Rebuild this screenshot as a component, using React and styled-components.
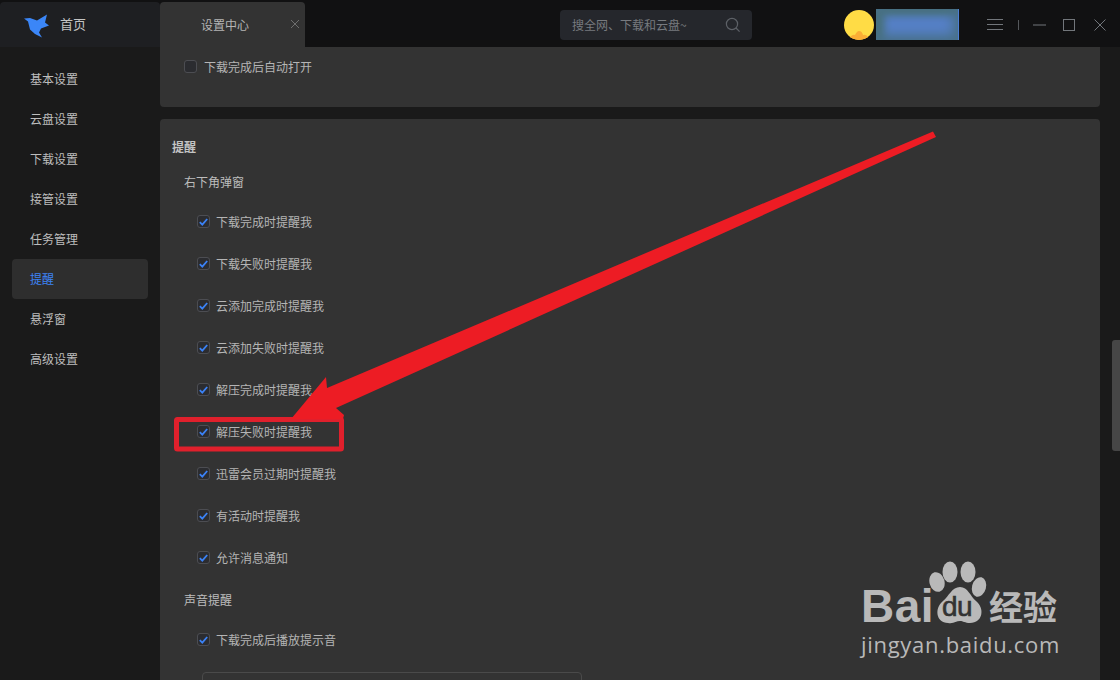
import React from "react";
import styled, { createGlobalStyle } from "styled-components";

const Global = createGlobalStyle`
  html, body { margin: 0; padding: 0; background: #1a1a1a; overflow: hidden; }
  * { box-sizing: border-box; }
  body { font-family: "Noto Sans CJK SC", "Noto Sans", sans-serif; font-size: 12px; color: #bdbdbd; }
`;

const Page = styled.div`
  position: relative; width: 1120px; height: 680px; overflow: hidden;
  display: flex; flex-direction: column; background: #1a1a1a;
`;
const TopBar = styled.header`
  height: 47px; flex: none; background: #111112; display: flex; align-items: flex-end;
`;
const HomeTab = styled.div`
  width: 160px; height: 45px; background: #1e1f22; border-radius: 4px 4px 0 0;
  display: flex; align-items: center; padding: 0 0 2px 24px; gap: 10px;
  font-size: 13px; color: #c4c4c4;
  svg { margin-top: 4px; }
`;
const SettingsTab = styled.div`
  width: 145px; height: 45px; background: #333333; border-radius: 4px 4px 0 0;
  display: flex; align-items: center; justify-content: space-between;
  padding: 0 5px 1px 41px; font-size: 12px; color: #b5b5b5;
  svg { margin-top: -1px; }
`;
const Search = styled.div`
  width: 192px; height: 30px; margin: 0 0 7px 255px; background: #25272c; border-radius: 4px;
  display: flex; align-items: center; justify-content: space-between;
  padding: 0 11px 2px 12px; color: #777a7f; font-size: 12px;
  svg { margin-top: 2px; }
`;
const UserArea = styled.div`
  display: flex; align-items: center; margin: 0 0 7px 92px; height: 30px; gap: 2px;
`;
const Avatar = styled.div`
  position: relative; overflow: hidden; width: 30px; height: 30px; border-radius: 50%; background: #ffdc45;
`;
const Name = styled.div`
  width: 83px; height: 31px; margin-top: -2px;
  background: #5680c8;
  box-shadow: inset 0 0 12px 5px #48708a, inset 0 7px 7px -3px #46705a, inset 10px 0 9px -4px #46705a;
  border-right: 1px solid #4c7fd6;
`;
const WinIcons = styled.div`
  display: flex; align-items: center; margin: 0 0 7px 28px; height: 30px; color: #72767b;
`;
const Sep = styled.i`
  display: block; width: 1px; height: 10px; background: #55585c; margin: 0 14px 0 15px;
`;
const WinBtn = styled.svg`
  display: block; margin-right: ${p => p.$gap}px;
`;
const Body = styled.div`
  flex: 1; min-height: 0; display: flex;
`;
const Sidebar = styled.nav`
  width: 160px; flex: none; padding: 12px 12px 0; display: flex; flex-direction: column;
`;
const NavItem = styled.div`
  height: 40px; border-radius: 4px; padding: 0 0 2px 18px; display: flex; align-items: center;
  font-size: 12px;
  color: ${p => (p.$active ? "#3d83f5" : "#bdbdbd")};
  background: ${p => (p.$active ? "#2e2e2e" : "transparent")};
`;
const Content = styled.main`
  width: 940px; flex: none; display: flex; flex-direction: column; gap: 12px;
`;
const TopCard = styled.section`
  height: 60px; flex: none; background: #333333; border-radius: 0 0 4px 4px; padding: 11px 0 0 24px;
`;
const Card = styled.section`
  flex: 1; background: #333333; border-radius: 4px 4px 0 0; padding: 18px 0 0 12px;
`;
const SectionTitle = styled.h2`
  margin: 1px 0 0; height: 18px; line-height: 18px; font-size: 12px; font-weight: 700; color: #c4c4c4;
`;
const SubTitle = styled.h3`
  margin: ${p => p.$top}px 0 10px 12px; height: 18px; line-height: 18px;
  font-size: 12px; font-weight: 400; color: #bdbdbd;
`;
const Row = styled.label`
  height: ${p => p.$h || 42}px; display: flex; align-items: center; gap: ${p => p.$gap ?? 6}px;
  padding-left: ${p => p.$pad ?? 25}px; padding-bottom: 2px; color: #b5b5b5; font-size: 12px;
`;
const Box = styled.span`
  width: 13px; height: 13px; flex: none; border-radius: 3px; border: 1px solid #4c4d52;
  background: #2b2c30; display: flex; align-items: center; justify-content: center;
  margin-top: 1px;
`;
const SelectBox = styled.div`
  width: 380px; height: 40px; margin: 11px 0 0 30px; border: 1px solid #4a4a4a; border-radius: 4px;
`;
const Gutter = styled.div`
  position: relative; flex: 1; background: #1a1a1a;
`;
const Thumb = styled.div`
  position: absolute; left: 12px; top: 293px; width: 8px; height: 111px;
  background: #464646; border-radius: 3px 0 0 3px;
`;
const Annotation = styled.svg`
  position: absolute; inset: 0; pointer-events: none;
`;
const Watermark = styled.div`
  position: absolute; left: 858px; top: 556px; width: 210px; height: 104px; color: #b9b9b9;
  font-family: "Liberation Sans", sans-serif;
`;
const Paw = styled.svg`
  position: absolute; left: 70px; top: 4px;
`;
const Bai = styled.span`
  position: absolute; left: 3px; top: 27px; font-size: 46px; line-height: 46px; font-weight: 700; letter-spacing: 0.5px;
`;
const Du = styled.span`
  position: absolute; left: 84px; top: 37px; font-size: 28px; line-height: 28px; font-weight: 400; color: #333; letter-spacing: -0.5px;
  -webkit-text-stroke: 0.6px #333;
`;
const Jing = styled.span`
  position: absolute; left: 131px; top: 31px; font-family: "Noto Sans CJK SC", sans-serif;
  font-size: 34px; line-height: 38px; font-weight: 700;
`;
const Url = styled.span`
  position: absolute; left: 3px; top: 74px; font-family: "Open Sans", sans-serif; font-size: 22px; line-height: 28px; letter-spacing: 0.7px;
`;

const Check = ({ on }) => (
  <Box>
    {on && (
      <svg width="9" height="8" viewBox="0 0 9 8">
        <path d="M0.8 4.2 L3.3 6.6 L8.2 1" fill="none" stroke="#3b82f6" strokeWidth="1.8" />
      </svg>
    )}
  </Box>
);

const nav = ["基本设置", "云盘设置", "下载设置", "接管设置", "任务管理", "提醒", "悬浮窗", "高级设置"];
const popup = [
  "下载完成时提醒我", "下载失败时提醒我", "云添加完成时提醒我", "云添加失败时提醒我",
  "解压完成时提醒我", "解压失败时提醒我", "迅雷会员过期时提醒我", "有活动时提醒我", "允许消息通知",
];

export default function App() {
  return (
    <Page>
      <Global />
      <TopBar>
        <HomeTab>
          <svg width="26" height="24" viewBox="24 14.5 26 24">
            <path d="M24 19 L30 18.5 L37 21 L47 15 L45 23 L49 26 L41 29 L39 33 L42 38 L35 34.5 L30 30 L28 22 Z" fill="#3b86f7" />
          </svg>
          首页
        </HomeTab>
        <SettingsTab>
          设置中心
          <svg width="10" height="10" viewBox="0 0 10 10">
            <path d="M1 1 L9 9 M9 1 L1 9" stroke="#6e6e6e" strokeWidth="1" />
          </svg>
        </SettingsTab>
        <Search>
          搜全网、下载和云盘~
          <svg width="16" height="16" viewBox="0 0 16 16">
            <circle cx="7" cy="7" r="5.6" fill="none" stroke="#5d6167" strokeWidth="1.2" />
            <path d="M11 11 L14.6 14.6" stroke="#5d6167" strokeWidth="1.2" />
          </svg>
        </Search>
        <UserArea>
          <Avatar>
            <svg width="30" height="30" viewBox="0 0 30 30">
              <path d="M6 30 L6 27 Q9 24 11 25 Q13 21 15 21 Q18 21 19 25 Q22 24 24 27 L24 30 Z" fill="#fbae35" />
            </svg>
          </Avatar>
          <Name />
        </UserArea>
        <WinIcons>
          <WinBtn width="16" height="12" viewBox="0 0 16 12" $gap={0}>
            <path d="M0 .5 H16 M0 5.5 H16 M0 10.5 H16" stroke="#72767b" />
          </WinBtn>
          <Sep />
          <WinBtn width="13" height="2" viewBox="0 0 13 2" $gap={17}>
            <path d="M0 1 H13" stroke="#72767b" />
          </WinBtn>
          <WinBtn width="12" height="12" viewBox="0 0 12 12" $gap={19}>
            <rect x=".5" y=".5" width="11" height="11" fill="none" stroke="#72767b" />
          </WinBtn>
          <WinBtn width="12" height="12" viewBox="0 0 12 12" $gap={0}>
            <path d="M.5 .5 L11.5 11.5 M11.5 .5 L.5 11.5" stroke="#72767b" />
          </WinBtn>
        </WinIcons>
      </TopBar>
      <Body>
        <Sidebar>
          {nav.map(n => (
            <NavItem key={n} $active={n === "提醒"}>{n}</NavItem>
          ))}
        </Sidebar>
        <Content>
          <TopCard>
            <Row $h={18} $pad={0} $gap={7}><Check />下载完成后自动打开</Row>
          </TopCard>
          <Card>
            <SectionTitle>提醒</SectionTitle>
            <SubTitle $top={17}>右下角弹窗</SubTitle>
            {popup.map(t => (
              <Row key={t}><Check on />{t}</Row>
            ))}
            <SubTitle $top={12}>声音提醒</SubTitle>
            <Row><Check on />下载完成后播放提示音</Row>
            <SelectBox />
          </Card>
        </Content>
        <Gutter><Thumb /></Gutter>
      </Body>
      <Annotation width="1120" height="680" viewBox="0 0 1120 680">
        <rect x="176.5" y="419.5" width="165" height="29.5" rx="1" fill="none" stroke="#e0202c" strokeWidth="5" />
        <path d="M933 131.500 L936 137 L336 408 L344 415 L343 419 L291 419 L326 377 L327 388 Z" fill="#ed1c24" />
      </Annotation>
      <Watermark>
        <Paw width="62" height="66" viewBox="0 0 62 66">
          <ellipse cx="9" cy="22" rx="7.500" ry="10" transform="rotate(-15 9 22)" fill="#b9b9b9" />
          <ellipse cx="22" cy="12" rx="7.500" ry="10.500" fill="#b9b9b9" />
          <ellipse cx="40" cy="12" rx="7.500" ry="10.500" fill="#b9b9b9" />
          <ellipse cx="51" cy="27" rx="7" ry="10" transform="rotate(15 51 27)" fill="#b9b9b9" />
          <path d="M32 27 C40 27 42 36 48 41 C57 48 55 63 42 63 C37 63 35 61 32 61 C28 61 26 64 20 63 C8 63 6 48 15 41 C21 36 24 27 32 27 Z" fill="#b9b9b9" />
        </Paw>
        <Bai>Bai</Bai>
        <Du>du</Du>
        <Jing>经验</Jing>
        <Url>jingyan.baidu.com</Url>
      </Watermark>
    </Page>
  );
}
